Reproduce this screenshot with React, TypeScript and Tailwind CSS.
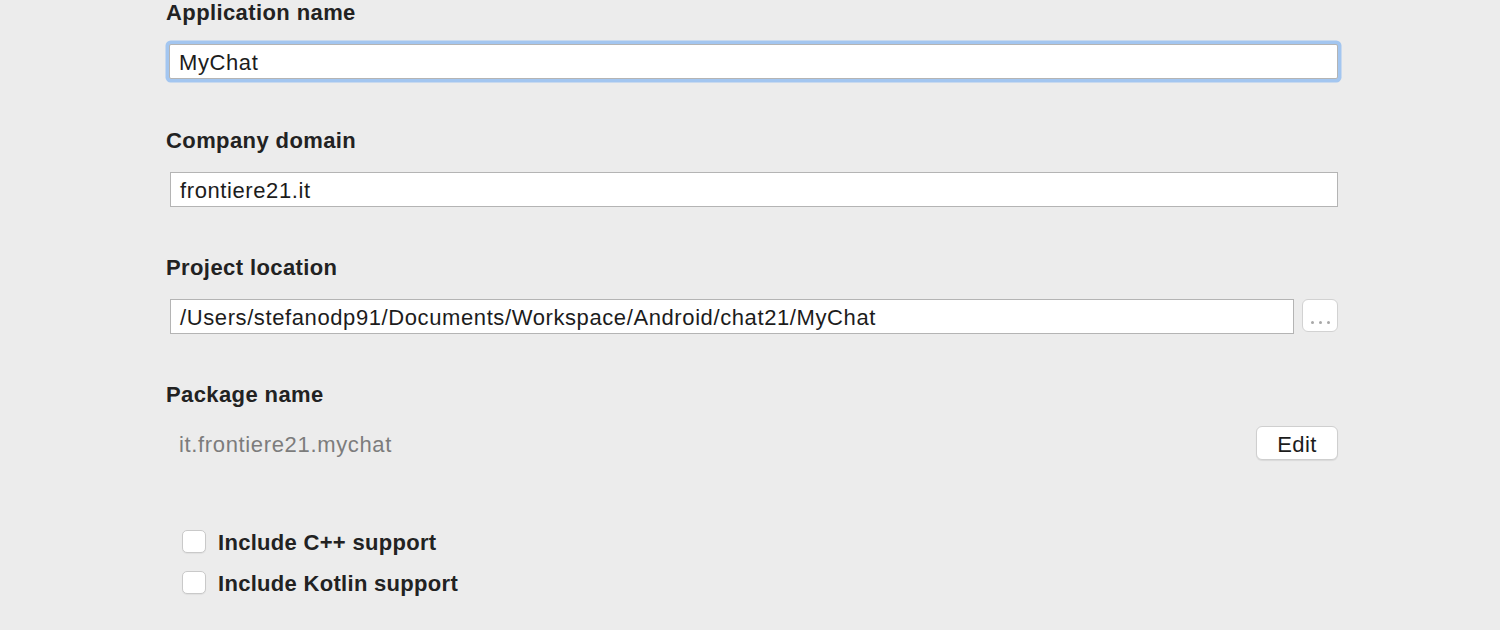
import React from 'react';

const font = { fontFamily: '"Liberation Sans", Arial, sans-serif' };

const Label = ({ children }: { children: React.ReactNode }) => (
  <div className="h-[26px] text-[22px] leading-[26px] font-bold tracking-[0.4px] text-[#222]">{children}</div>
);

const Field = ({ value, focused = false }: { value: string; focused?: boolean }) => (
  <div
    className={`flex h-[35px] flex-1 items-center border border-[#b4b4b4] bg-white pt-[2px] pl-[9px] text-[22px] tracking-[0.6px] text-[#1c1c1c] ${
      focused ? 'rounded-[2px] shadow-[0_0_0_3.5px_#a3c6f0]' : ''
    }`}
  >
    {value}
  </div>
);

const Checkbox = ({ label }: { label: string }) => (
  <div className="flex h-[41px] items-center">
    <div className="ml-[16px] h-[23px] w-[24px] rounded-[5px] border border-[#c9c9c9] bg-white shadow-[0_1px_1px_rgba(0,0,0,0.05)]" />
    <span className="ml-[12px] pt-[1px] text-[22px] font-bold tracking-[0.3px] text-[#222]">{label}</span>
  </div>
);

export default function App() {
  return (
    <div className="h-[630px] w-[1500px] overflow-hidden bg-[#ececec] pl-[166px]" style={font}>
      <div className="flex w-[1172px] flex-col">
        {/* Application name */}
        <div className="flex flex-col">
          <Label>Application name</Label>
          <div className="mt-[18px] flex pl-[3px]">
            <Field value="MyChat" focused />
          </div>
        </div>

        {/* Company domain */}
        <div className="mt-[49px] flex flex-col">
          <Label>Company domain</Label>
          <div className="mt-[18px] flex pl-[4px]">
            <Field value="frontiere21.it" />
          </div>
        </div>

        {/* Project location */}
        <div className="mt-[48px] flex flex-col">
          <Label>Project location</Label>
          <div className="mt-[18px] flex pl-[4px]">
            <Field value="/Users/stefanodp91/Documents/Workspace/Android/chat21/MyChat" />
            <button className="ml-[8px] flex h-[33px] w-[36px] items-end justify-center gap-[5px] rounded-[6px] border border-[#d2d2d2] bg-white pb-[7px]">
              <span className="h-[3px] w-[3px] rounded-full bg-[#a8a8a8]" />
              <span className="h-[3px] w-[3px] rounded-full bg-[#a8a8a8]" />
              <span className="h-[3px] w-[3px] rounded-full bg-[#a8a8a8]" />
            </button>
          </div>
        </div>

        {/* Package name */}
        <div className="mt-[48px] flex flex-col">
          <Label>Package name</Label>
          <div className="mt-[18px] flex h-[34px] items-center justify-between pl-[13px]">
            <span className="pt-[2px] text-[22px] tracking-[0.65px] text-[#7c7c7c]">it.frontiere21.mychat</span>
            <button className="flex h-[34px] w-[82px] items-center justify-center rounded-[6px] border border-[#cfcfcf] bg-white pt-[2px] text-[22px] tracking-[0.4px] text-[#1c1c1c] shadow-[0_1px_1px_rgba(0,0,0,0.08)]">
              Edit
            </button>
          </div>
        </div>

        {/* Options */}
        <div className="mt-[61px] flex flex-col">
          <Checkbox label="Include C++ support" />
          <Checkbox label="Include Kotlin support" />
        </div>
      </div>
    </div>
  );
}
